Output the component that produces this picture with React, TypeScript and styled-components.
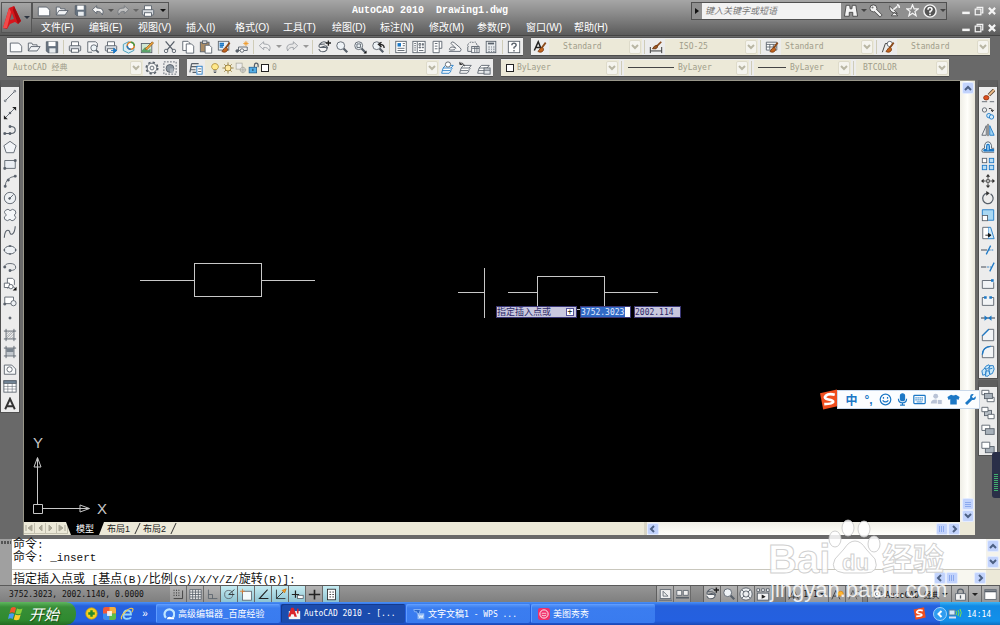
import React from "react";
import styled, { createGlobalStyle, css } from "styled-components";

const MONO = `"DejaVu Sans Mono", "Liberation Mono", "Noto Sans CJK SC", monospace`;
const SANS = `"Liberation Sans", "Noto Sans CJK SC", sans-serif`;
const K = "#58606a";
const B = "#1c78c6";

const GlobalStyle = createGlobalStyle`
  * { box-sizing: border-box; }
  body { margin: 0; background: #696969; font: 10px ${SANS}; }
  button, input, select { font: inherit; color: inherit; margin: 0; padding: 0; border: 0; background: none; border-radius: 0; }
  svg { display: block; flex: none; }
`;

/* ---------- icon drawings, all on a 16 x 16 grid ---------- */

const glass = (
  <>
    <path d="M9.500 9.500L14 14" stroke={K} strokeWidth="2.600" />
    <circle cx="6.500" cy="6.500" r="4.500" fill="#eef3f7" />
  </>
);
const printer = (
  <>
    <path d="M4 7V2h8v5" fill="#fff" />
    <rect x="1.500" y="6.500" width="13" height="6" rx="1" fill="#d5d9de" />
    <rect x="4" y="10" width="8" height="4" fill="#fff" />
  </>
);
const brush = (
  <>
    <path d="M14.500 3L10 9" stroke="#8a4a1c" strokeWidth="2" />
    <path d="M10.500 8.500c-3 0-2.500 3-5 4.500 3 2 7 .5 6.500-3z" fill="#c4641e" stroke="#7a3c12" />
  </>
);
const layers = <path d="M5 5h9l-2.500 3H2.500zM2.500 8L1.500 11h9l2.500-3M1.500 11L.8 14h8.500l2.500-3" fill="#fff" />;
const pageShape = <path d="M1.500 13.500v-10h9q3 1 4 4v6z" fill="#fbfcfd" />;
const hatchFrame = <path d="M3.500 1v14M12.500 1v14M1 3.500h14M1 12.500h14" />;

const ICONS: Record<string, React.ReactNode> = {
  new: pageShape,
  open: <path d="M1.500 12.500v-9h4l1 2h5v2M1.500 12.500l3-5h10.500l-3.500 5z" fill="#f1f3f5" />,
  save: (
    <>
      <path d="M1.500 2h13v12.500h-11l-2-2z" fill="#66727f" />
      <rect x="4" y="2" width="8" height="5" fill="#fff" stroke="none" />
      <rect x="5" y="9.500" width="7" height="5" fill="#e8ecef" stroke="none" />
    </>
  ),
  undo: <path d="M6.500 2L1.500 6.500l5 4.500V8.500q5-.5 6.500 4 3.500-8-6.500-8z" fill="#f4f4f4" />,
  redo: <path d="M9.500 2l5 4.500-5 4.500V8.500q-5-.5-6.500 4-3.500-8 6.500-8z" fill="#e4e4e4" />,
  print: printer,
  preview: (
    <>
      <path d="M2 14V2h9l2 2v4M2 14h5" fill="#f7f8f9" />
      <circle cx="9" cy="9" r="3.500" fill="#eef5f8" />
      <path d="M11.500 11.500l3 3" strokeWidth="2" />
    </>
  ),
  publish: (
    <>
      {printer}
      <path d="M8 12h6M11 9.500l3.500 2.500-3.500 3z" stroke={B} fill={B} />
    </>
  ),
  dwf: (
    <>
      <path d="M1.500 5l6-3 6 3v7l-6 3-6-3z" fill="#d8ecf4" stroke="#3a97b5" />
      <circle cx="10" cy="6.500" r="4" fill="#fff" stroke="#d97a23" strokeWidth="1.800" />
      <path d="M10 2.500a4 4 0 0 1 4 4" stroke="#3a9b4a" strokeWidth="1.800" />
      <path d="M6 6.500a4 4 0 0 0 4 4" stroke={B} strokeWidth="1.800" />
    </>
  ),
  markup: (
    <>
      <rect x="1.500" y="4" width="12" height="10.500" fill="#cfe6d2" />
      <path d="M2 12l4-4 3 4 3-2v4H2z" fill="#5aa36a" stroke="none" />
      <path d="M6 10l8-8 1.500 1.500-8 8z" fill="#f1a33a" stroke="#8a5a1a" strokeWidth=".8" />
    </>
  ),
  cut: (
    <>
      <path d="M3 1.500l8.500 10M13 1.500L4.500 11.500" strokeWidth="1.500" />
      <circle cx="3.500" cy="12.500" r="2" />
      <circle cx="12.500" cy="12.500" r="2" />
    </>
  ),
  copy: (
    <>
      <path d="M2 12V1.500h6l2 2V12z" fill="#fff" />
      <path d="M6 15V4.500h6l2.500 2.500v8z" fill="#fff" />
    </>
  ),
  paste: (
    <>
      <rect x="1.500" y="2.500" width="10" height="11" fill="#a98c66" />
      <rect x="4" y="1" width="5" height="3" fill="#ddd" />
      <path d="M7 15V6h5l2.500 2.500V15z" fill="#fff" />
    </>
  ),
  match: (
    <>
      <rect x="1.500" y="1.500" width="12" height="10" fill="#e9eff5" />
      <path d="M3 4h5M3 6h5M3 8h4" stroke={B} strokeWidth="1.500" />
      {brush}
    </>
  ),
  blockEdit: (
    <>
      <path d="M2 12h4M10 12h4V8H4v4" />
      <circle cx="2.500" cy="12.500" r="1.500" fill={K} />
      <circle cx="8" cy="12" r="2" fill="#fff" />
      <path d="M12.500 1v6M9.500 4h6M10.500 2l4 4M14.500 2l-4 4" stroke="#ee9a2b" />
    </>
  ),
  pan: (
    <>
      <path d="M3 5q3-4 7-2.500l1 1.500M3 5Q1 8 4 8.500h6q2 1 1 3-3 3-7 1.500L2 10.500M3 5l6-.5M4 8.500L10 6.500M10 6.500L12 8.500 11 11.500" fill="#f5f5f5" strokeWidth="1.200" />
      <path d="M13 .5v6M10 3.500h6" stroke="#222" strokeWidth="1.600" />
    </>
  ),
  zoom: glass,
  zoomWindow: (
    <>
      {glass}
      <path d="M4.500 4.500h4v4h-4z" />
      <path d="M15.500 12v3.500H12z" fill="#111" stroke="none" />
    </>
  ),
  zoomPrev: (
    <>
      {glass}
      <path d="M15 9q0-4-5-4M12 2.500L8.500 5l3.500 3" stroke="#222" strokeWidth="1.500" />
    </>
  ),
  props: (
    <>
      <rect x="2" y="1.500" width="12" height="13" fill="#fff" />
      <rect x="4" y="3.500" width="4" height="4" fill={B} stroke="none" />
      <path d="M10 4h2.500M10 6.500h2.500M4 9.500h8M4 12h8" />
    </>
  ),
  design: (
    <>
      <rect x="1" y="1.500" width="14" height="13" fill="#fff" />
      <path d="M6 2v12M8 4h2v2H8zM12 4h1v2h-1zM8 8h2v1H8zM12 8h1v1h-1zM8 12h5M2.500 4h2M2.500 6.500h2M2.500 9h2M2.500 11.500h2" />
    </>
  ),
  palettes: (
    <>
      <path d="M3.500 1.500h10v8h-3v5h-7z" fill="#fff" />
      <path d="M10.500 2v8M5.500 4h3M5.500 7h3M5.500 10h3" />
    </>
  ),
  sheets: <path d="M1 13h13q2-2 0-4L7 3Q4 1 3.500 4L9 9.500q-5-3-7 0T8 11" fill="#f6f6f6" />,
  markups: (
    <>
      <path d="M3 8q-3-3 1-4 1-3 4-1 4-2 4 2 3 1 1 3" strokeDasharray="2 1" />
      <rect x="6.500" y="7.500" width="8.500" height="7" fill="#fff" />
      <path d="M7 9.500h8M10 8v6M12.500 8v6" />
      <path d="M2 8v5h4" />
    </>
  ),
  calc: (
    <>
      <rect x="2.500" y="1.500" width="11" height="13" fill="#e8ebee" />
      <path d="M4.500 4h7" strokeWidth="2" />
      <path d="M5 8h1.500M8 8h1M10.500 8H12M5 10.500h1.500M8 10.500h1M10.500 10.500H12M5 13h1.500M8 13h1M10.500 13H12" />
    </>
  ),
  help: (
    <>
      <rect x="1.500" y="1.500" width="13" height="13" fill="#fff" />
      <path d="M5.500 6q0-2.500 2.500-2.500T10.500 6Q10 7.500 8 8.500V10M8 11.500V13" strokeWidth="1.500" />
    </>
  ),
  textStyle: (
    <>
      <path d="M1.500 12L6 2l4 10M3.500 8.500H9" stroke="#222" strokeWidth="1.700" />
      {brush}
    </>
  ),
  dimStyle: (
    <>
      <path d="M1.500 8v7M14.500 8v7M2 12.500h12" stroke="#222" />
      <path d="M14 2L9 7" stroke="#8a4a1c" strokeWidth="2" />
      <path d="M4 10q2-4 5-4 2 2-1 4z" fill="#a05a24" stroke="#6b3510" />
    </>
  ),
  tableStyle: (
    <>
      <path d="M1.500 2.500h12v9h-12zM1.500 5h12M1.500 8h12M5.500 5v6M9.500 5v6" fill="#fff" />
      {brush}
    </>
  ),
  leaderStyle: (
    <>
      <path d="M1.500 14L5 4h4" stroke="#333" />
      <circle cx="10" cy="4.500" r="3" fill="#fff" />
      {brush}
    </>
  ),
  gear: (
    <>
      <circle cx="8" cy="8" r="6.500" strokeDasharray="2.600 2.500" strokeWidth="2" />
      <circle cx="8" cy="8" r="5.500" fill="#f4f4f4" />
      <circle cx="8" cy="8" r="2.200" />
    </>
  ),
  gearBox: (
    <>
      <rect x="1" y="1" width="14" height="14" strokeDasharray="2 1.500" />
      <circle cx="8" cy="8.500" r="4.500" fill="#8b959f" />
      <path d="M8 8.500h4v5H8z" fill="#aab2ba" stroke="none" />
    </>
  ),
  layerProps: (
    <>
      <path d="M3 3h8M2 6.500h8M1.500 10h6M4 13h4M3 3L1 13" strokeWidth="1.400" />
      <rect x="9" y="6" width="6" height="9" fill="#fff" stroke={B} />
      <path d="M10.500 9H14M10.500 12H14" />
    </>
  ),
  bulb: (
    <>
      <path d="M5.500 10Q3 7.500 3.500 5.500 4.500 2 8 2t4.500 3.500Q13 7.500 10.500 10z" fill="#ffe98a" stroke="#a8842a" />
      <path d="M6 12h4M6.500 14h3" strokeWidth="1.600" />
    </>
  ),
  sun: (
    <>
      <path d="M8 .5v15M.5 8h15M3 3l10 10M13 3L3 13" stroke="#8a6f2a" />
      <circle cx="8" cy="8" r="4" fill="#ffe9a0" stroke="#8a6f2a" />
    </>
  ),
  freeze: (
    <g stroke="#a9a99c">
      <rect x="1.500" y="1.500" width="8" height="8" fill="#eee" />
      <circle cx="10.500" cy="10.500" r="3.500" fill="#ddd" />
      <path d="M10.500 6v9M6 10.500h9" />
    </g>
  ),
  unlock: (
    <>
      <path d="M8.500 7V4.500q0-3 2.500-3t2.500 3V7" strokeWidth="1.600" />
      <rect x="1.500" y="7" width="10" height="7.500" fill="#54aee6" stroke="#1d5c8f" />
      <path d="M6.500 9v3" stroke="#123" />
    </>
  ),
  layerCurrent: (
    <>
      <g stroke={B}>{layers}</g>
      <circle cx="8" cy="4" r="3" fill="#fff" />
    </>
  ),
  layerPrev: (
    <>
      {layers}
      <path d="M1 3q4-2 5 3M1 1v3h3" stroke="#222" />
    </>
  ),
  layerState: (
    <>
      {layers}
      <rect x="8" y="8" width="7" height="7" fill="#dfe3e7" />
      <path d="M8 10.500h7" />
    </>
  ),
  line: (
    <>
      <path d="M2.500 13.500l11-11" />
      <circle cx="2.500" cy="13.500" r="1" fill="#fff" />
      <circle cx="13.500" cy="2.500" r="1" fill="#fff" />
    </>
  ),
  xline: (
    <>
      <path d="M2 14L14 2" />
      <path d="M1 10.500V15h4.500zM15 5.500V1h-4.500z" fill="#222" stroke="none" />
      <circle cx="8" cy="8" r="1" fill="#222" />
    </>
  ),
  pline: (
    <>
      <path d="M2 12h7q5 0 5-4t-5-4H8" strokeWidth="1.300" />
      <path d="M1 11h2v2H1zM7 11h2v2H7zM7 3h2v2H7z" fill={K} />
    </>
  ),
  polygon: <path d="M8 1.500l7 5-2.700 8H3.700L1 6.500z" fill="#f3f5f8" />,
  rect: (
    <>
      <path d="M2 4h12v9H2z" fill="#e9edf2" />
      <path d="M1 12h2v2H1zM13 3h2v2h-2z" fill={K} />
    </>
  ),
  arc: (
    <>
      <path d="M2.500 14Q3 4 14 2.500" />
      <path d="M1.500 13h2v2h-2zM5 6h2v2H5zM13 1.500h2v2h-2z" fill={K} />
    </>
  ),
  circle: (
    <>
      <circle cx="8" cy="8" r="6.500" fill="#eef1f4" />
      <path d="M8 8l4-4" />
      <circle cx="7.500" cy="8.500" r="1" fill={K} />
    </>
  ),
  cloud: <path d="M4 8Q0 5 3 2.500T8 3q3-3 6 0 2 3-1 5 3 3 0 5.500T8 13q-3 3-6 0-2-3 2-5z" fill="#f5f7f9" />,
  spline: <path d="M1.500 14.500Q2 6 5.500 6q2 0 2.500 3 .5 2 2.500 1.500Q13.500 9 14 1.500" strokeWidth="1.300" />,
  ellipse: (
    <>
      <ellipse cx="8" cy="8" rx="6.500" ry="4.500" fill="#eef1f4" />
      <path d="M7 3h2v1H7zM1 7.500h1v1H1zM14 7.500h1v1h-1zM7.500 12h1v1h-1z" />
    </>
  ),
  ellipseArc: (
    <>
      <path d="M2 8q0-4 6-4t6.500 4-6.500 4" />
      <path d="M1 7h2v2H1zM7 11h2v2H7z" fill={K} />
    </>
  ),
  insert: (
    <>
      <path d="M5 7V1.500h6l2 2V9" fill="#fff" />
      <path d="M1.500 7h6v5h-6zM5 13l5-3 4 3" fill="#fff" />
      <circle cx="9" cy="11" r="2.500" fill="#fff" />
      <path d="M15.500 11v4.500H11z" fill="#111" stroke="none" />
    </>
  ),
  makeBlock: (
    <>
      <path d="M2 11V3.500h10V11z" fill="#fff" />
      <circle cx="12" cy="10.500" r="3" fill="#eef1f4" />
      <path d="M1 10.500h2v2H1z" fill={K} />
    </>
  ),
  point: <circle cx="8" cy="8" r="1.200" fill={K} />,
  hatch: (
    <>
      <path d="M4 7l3-3M4 10l6-6M4 12l8-8M7 12l5-5M10 12l2-2" strokeWidth=".5" />
      {hatchFrame}
    </>
  ),
  gradient: (
    <>
      <rect x="4" y="4" width="8" height="4" fill="#7b858f" stroke="none" />
      <rect x="4" y="8" width="8" height="4" fill="#c3c9cf" stroke="none" />
      {hatchFrame}
    </>
  ),
  region: (
    <>
      <path d="M1.500 14V3.500H10L14.500 8v6z" fill="#f7f9fa" />
      <circle cx="7.500" cy="8.500" r="3" fill="#fff" />
    </>
  ),
  table: (
    <>
      <rect x="1" y="2" width="14" height="13" fill="#fff" />
      <rect x="1" y="2" width="14" height="3" fill="#73879a" />
      <path d="M1 8.500h14M1 11.500h14M5.500 5v10M10.500 5v10" strokeWidth=".6" />
    </>
  ),
  mtext: <path d="M2.500 14L8 2l5.500 12M4.500 10.500h7" stroke="#333" strokeWidth="2.200" />,
  erase: (
    <>
      <path d="M15 1L9 7" stroke="#5b4636" strokeWidth="4" />
      <path d="M15 1L9 7" stroke="#f2c08a" strokeWidth="2" />
      <ellipse cx="6" cy="10" rx="3" ry="2.500" fill="#e0501c" stroke="#8f2f0c" />
      <path d="M1 14.500h6M10 14.500h5" />
    </>
  ),
  copyObj: (
    <>
      <circle cx="4" cy="4.500" r="2.500" />
      <path d="M9 3q4-1 4 3M11.500 4.500L13 6.500l1.500-2" stroke="#222" />
      <circle cx="9" cy="11" r="2.500" stroke={B} fill="#d3ebfa" />
      <circle cx="12" cy="12.500" r="2.500" stroke={B} fill="#d3ebfa" />
    </>
  ),
  mirror: (
    <>
      <path d="M6 3v11H1z" fill="#eee" />
      <path d="M10 3v11h5z" fill="#9fd3f2" stroke={B} />
      <path d="M8 1v14" stroke="#222" />
    </>
  ),
  offset: (
    <>
      <path d="M15 9.500h-3V6q-1-4-4-4T4 6v3.500q-3 0-3 2.500t2 2h12" fill="#e2f2fc" />
      <path d="M15 12.500H4q-1.500-1 0-1.500h2.500V7q0-2 1.500-2t1.500 2v4H15" stroke={B} strokeWidth="1.500" fill="#b9def5" />
    </>
  ),
  array: (
    <>
      <rect x="1.500" y="1.500" width="5" height="5" fill="#fff" />
      <g fill="#b9def5" stroke={B}>
        <rect x="9.500" y="1.500" width="5" height="5" />
        <rect x="1.500" y="9.500" width="5" height="5" />
        <rect x="9.500" y="9.500" width="5" height="5" />
      </g>
    </>
  ),
  move: (
    <>
      <path d="M8 1.500v4M8 10.500v4M1.500 8h4M10.500 8h4M6.500 6.500h3v3h-3z" stroke="#333" />
      <path d="M8 0l2.500 3h-5zM8 16l2.500-3h-5zM0 8l3-2.500v5zM16 8l-3-2.500v5z" fill="#333" stroke="none" />
    </>
  ),
  rotate: (
    <>
      <path d="M7 2.500a6 6 0 1 0 4 .8" strokeWidth="1.400" />
      <path d="M6 0l4 2.500L6 5.500z" fill="#333" stroke="none" />
    </>
  ),
  scale: (
    <>
      <path d="M1.500 8V2h13v12H8" fill="#a9d8f3" stroke={B} />
      <rect x="1.500" y="8.500" width="6" height="6" fill="#fff" />
    </>
  ),
  stretch: (
    <>
      <path d="M8 1.500h3l4 13H8z" fill="#cde8f8" stroke={B} />
      <path d="M8 1.500H2v13h6" fill="#fff" />
      <path d="M5 10.500h5M8.500 8.500l3 2-3 2z" stroke="#111" fill="#111" />
    </>
  ),
  trim: (
    <>
      <path d="M0 8h7" strokeWidth="1.300" />
      <path d="M9 8h6" strokeDasharray="2 1" stroke={B} />
      <path d="M6 13l5-10" stroke={B} strokeWidth="1.500" />
    </>
  ),
  extend: (
    <>
      <path d="M0 8h6" strokeWidth="1.300" />
      <path d="M7 8h5" strokeDasharray="2 1" stroke={B} />
      <path d="M10 13l5-10" stroke={B} strokeWidth="1.500" />
    </>
  ),
  breakPt: (
    <>
      <path d="M13 4H1.500v9h13V6" fill="#f2f4f6" />
      <path d="M11.500 2.500h3v3h-3z" fill={B} stroke="none" />
    </>
  ),
  breakObj: (
    <>
      <path d="M4 4H1.500v9h13V4H12" fill="#f2f4f6" />
      <path d="M3.500 2.500h3v3h-3zM9.500 2.500h3v3h-3z" fill={B} stroke="none" />
    </>
  ),
  join: (
    <>
      <path d="M0 8h16" strokeWidth="1.400" />
      <path d="M4 5l4 3-4 3zM12 5L8 8l4 3z" fill={B} stroke="none" />
    </>
  ),
  chamfer: (
    <>
      <path d="M1.500 14.500v-6l7-7h6v13z" fill="#f2f4f6" />
      <path d="M1.500 9l7.500-7.500" stroke={B} strokeWidth="1.500" />
    </>
  ),
  fillet: (
    <>
      <path d="M1.500 14.500V11Q2 2 11 1.500h3.500v13z" fill="#f2f4f6" />
      <path d="M1.500 11Q2 2 11 1.500" stroke={B} strokeWidth="1.500" />
    </>
  ),
  explode: (
    <g stroke={B} fill="#c9e7f8">
      <path d="M1 9l3-3 2 2-1 5-3 1zM4 6q1-3 5-4l1 2-3 3zM10 3h4l1 4-2 5-3 1-1-6z" />
      <path d="M6 9h3l1 4-2 2H5zM9 7l4-1" />
    </g>
  ),
  orderFront: (
    <>
      <path d="M1 1.500h8v5H1zM7 9.500h8v5H7z" fill="#fff" />
      <rect x="4" y="5" width="9" height="6" fill="#a8b1ba" />
    </>
  ),
  orderBack: (
    <>
      <rect x="4" y="5" width="8" height="6" fill="#b9c0c7" />
      <path d="M1 1.500h7v5H1zM8 9.500h7v5H8z" fill="#fff" />
    </>
  ),
  orderAbove: (
    <>
      <path d="M1 2.500h9v6H1z" fill="#fff" />
      <rect x="5" y="6.500" width="10" height="6.500" fill="#a8b1ba" />
    </>
  ),
  orderUnder: (
    <>
      <rect x="5" y="7.500" width="10" height="7" fill="#a8b1ba" />
      <path d="M1 2.500h9v7H1z" fill="#fff" />
    </>
  ),
  snap: (
    <>
      <path d="M2 3h1M5 3h1M8 3h1M2 6h1M5 6h1M8 6h1M2 9h1M5 9h1M8 9h1" strokeWidth="1.500" stroke="#333" />
      <path d="M2 13h11V3" stroke="#333" />
    </>
  ),
  grid: <path d="M1 2h14v12H1zM1 5h14M1 8h14M1 11h14M4.500 2v12M8 2v12M11.500 2v12" fill="#eee" />,
  ortho: <path d="M3 2v11h11M3 8h5v5" />,
  polar: (
    <>
      <circle cx="7" cy="8" r="5" />
      <path d="M7 8l7-6M7 8h7" stroke="#222" />
    </>
  ),
  osnap: (
    <>
      <rect x="3" y="4" width="11" height="11" fill="#f4fbfc" />
      <path d="M3 1v6M0 4h6" stroke="#e07b2a" />
    </>
  ),
  otrack: <path d="M13 2L3 13h11" stroke="#222" strokeWidth="1.300" />,
  ducs: (
    <>
      <path d="M3 2v11h11M3 13L12 4" stroke="#222" />
      <path d="M10 3l5-2-2 5z" fill="#f0a030" stroke="#c97512" />
    </>
  ),
  dyn: (
    <>
      <path d="M1 8h9M5.500 3v9" stroke="#222" strokeWidth="1.500" />
      <rect x="8" y="9" width="7" height="4" fill="#fff" />
    </>
  ),
  lwt: <path d="M1 8h14M8 2v12" stroke="#222" strokeWidth="2" />,
  qp: (
    <>
      <rect x="3" y="1.500" width="10" height="13" fill="#fff" stroke="#222" />
      <path d="M5.500 5h2M9 5h2M5.500 8h2M9 8h2M5.500 11h2M9 11h2" stroke="#222" />
    </>
  ),
  model: (
    <>
      <rect x="1.500" y="2" width="13" height="11" fill="#f0f0f0" />
      <path d="M5 4v6h6zM0 15h16" />
    </>
  ),
  layout: (
    <>
      <path d="M1 3h6v6H1zM9 3h6v6H9z" fill="#f0f0f0" />
      <path d="M0 12h16" strokeWidth="2" />
    </>
  ),
  wheel: (
    <>
      <circle cx="8" cy="8" r="7" fill="#eceff1" />
      <circle cx="8" cy="8" r="3.500" />
      <path d="M3 3l3 3M13 3l-3 3M3 13l3-3M13 13l-3-3" />
    </>
  ),
  motion: (
    <>
      <path d="M1 2h3v3H1zM6.500 2h3v3h-3zM12 2h3v3h-3z" fill="#fff" />
      <rect x="1.500" y="7" width="13" height="8" fill="#f4f4f4" />
      <path d="M6.500 8.500v5L11 11z" fill="#222" stroke="none" />
    </>
  ),
  scaleMark: <path d="M1 14L7 2l6 12M7 2v12M0 11h14" stroke="#333" />,
  annoVis: (
    <>
      <path d="M1 14L6 3l5 11M3 10h6" stroke="#333" />
      <circle cx="12" cy="7" r="3" fill="#ffb52e" stroke="#e08a12" />
    </>
  ),
  annoAuto: (
    <>
      <path d="M1 14L6 3l5 11M3 10h6" stroke="#555" />
      <circle cx="12" cy="7" r="3" fill="#ccc" stroke="#666" />
    </>
  ),
  lock: (
    <>
      <path d="M4.500 7V4.500Q4.500 1.500 8 1.500t3.500 3V7" strokeWidth="1.500" />
      <rect x="2" y="7" width="12" height="8" fill="#f4f4f4" />
      <path d="M8 9v4" strokeWidth="1.600" />
    </>
  ),
  clean: (
    <>
      <rect x="1" y="2" width="14" height="12" fill="#fff" />
      <path d="M1 4h14" strokeWidth="2.500" />
    </>
  ),
  binoculars: (
    <path d="M2.500 1.500h4l.5 4h2l.5-4h4L15.500 14H10V9.500H6V14H.5z" fill="#f4f4f4" stroke="#444" />
  ),
  key: (
    <>
      <path d="M6 6l8 8" stroke="#444" strokeWidth="4" />
      <circle cx="5" cy="5" r="4" fill="#f4f4f4" stroke="#444" />
      <path d="M5 5l8.500 8.500" stroke="#f4f4f4" strokeWidth="2.500" />
      <circle cx="4" cy="4" r="1.200" fill="#777" stroke="none" />
    </>
  ),
  dish: (
    <>
      <path d="M2 2.500q-1 9 9.500 9zM4 14.500h8L8 10z" fill="#f4f4f4" stroke="#444" />
      <path d="M6.500 7l5-4M11 1q3 0 3 4" stroke="#f4f4f4" strokeWidth="1.800" />
    </>
  ),
  star: <path d="M8 1l2 5h5l-4 3.300 1.500 5.200L8 11.500l-4.500 3L5 9.300 1 6h5z" fill="#888" stroke="#f4f4f4" strokeWidth="1.500" />,
  helpRound: (
    <>
      <circle cx="8" cy="8" r="7" fill="#555" stroke="#f4f4f4" strokeWidth="1.600" />
      <path d="M5.700 6.500q0-2.500 2.300-2.500t2.300 2.200Q10 8 8 8.500V10M8 11.200v1.600" stroke="#fff" strokeWidth="1.800" />
    </>
  ),
  min: <path d="M2 11h12" stroke="#f4f4f4" strokeWidth="4" />,
  restore: (
    <g stroke="#f4f4f4" strokeWidth="2">
      <path d="M5 4V2h9v9h-2" />
      <rect x="2" y="5" width="9" height="9" />
    </g>
  ),
  close: <path d="M3 3l10 10M13 3L3 13" stroke="#f4f4f4" strokeWidth="3.500" />,
  smile: (
    <g stroke={B} strokeWidth="1.500">
      <circle cx="8" cy="8" r="6.500" />
      <path d="M4.500 9q3.500 4 7 0M5.500 5v2M10.500 5v2" />
    </g>
  ),
  mic: (
    <g stroke={B} strokeWidth="1.500">
      <rect x="5.500" y="1" width="5" height="8.500" rx="2.500" fill={B} />
      <path d="M3 7q0 5 5 5t5-5M8 12v3M5 15h6" />
    </g>
  ),
  keyboard: (
    <g stroke={B}>
      <rect x="1" y="3" width="14" height="10" rx="1" strokeWidth="1.500" />
      <path d="M3 6h10M3 8.500h10" strokeDasharray="1.500 1" strokeWidth="1.500" />
      <path d="M4.500 11h7" />
    </g>
  ),
  person: (
    <g fill="#b9c3d6" stroke="none">
      <circle cx="7" cy="4" r="3" />
      <path d="M1 13q0-5 6-5t6 5z" />
      <rect x="9" y="8" width="6" height="6" stroke="#fff" />
    </g>
  ),
  shirt: <path d="M5 2q3 2 6 0l4.500 3L14 8.500l-2-1V14H4V7.500l-2 1L.5 5z" fill={B} stroke="none" />,
  wrench: (
    <>
      <path d="M2.500 13.500L9 7" stroke={B} strokeWidth="3.500" />
      <path d="M14.500 4l-3 2.500-2-2L12 1.500Q8 .5 7.500 4T10 8.500q5 1 4.500-4.500z" fill={B} stroke="none" />
    </>
  ),
};

function Icon({ name, size = 14, faded }: { name: string; size?: number; faded?: boolean }) {
  return (
    <svg width={size} height={size} viewBox="0 0 16 16" fill="none" stroke={K} opacity={faded ? 0.55 : 1} aria-hidden="true">
      {ICONS[name]}
    </svg>
  );
}

/* ---------- shared parts ---------- */

const Row = styled.div`
  display: flex;
  align-items: center;
`;

const IconButton = styled.button<{ $w?: number }>`
  display: flex;
  flex: none;
  align-items: center;
  justify-content: center;
  width: ${(p) => p.$w ?? 18}px;
  height: 16px;
`;

const Caret = styled.span<{ $color?: string }>`
  flex: none;
  border: 3px solid transparent;
  border-top-color: ${(p) => p.$color ?? "#222"};
  border-bottom-width: 0;
`;

const Latin = styled.span<{ $size: number }>`
  font-size: ${(p) => p.$size}px;
`;

/* CJK runs keep the parent size, the half-width runs between them take `latin`. */
function Mixed({ text, latin }: { text: string; latin: number }) {
  return (
    <>
      {text.split(/([\u4e00-\u9fff]+)/).map((run, i) =>
        i % 2 ? run : run && <Latin key={i} $size={latin}>{run}</Latin>
      )}
    </>
  );
}

/* ---------- title and menu ---------- */

const Header = styled.header`
  display: flex;
  height: 36px;
  padding: 2px 2px 0 1px;
  background: linear-gradient(#a6a6a6, #8a8a8a 40%, #5b5b5b);
  border-bottom: 1px solid #444;
  color: #fff;
`;

const AppButton = styled.button`
  display: flex;
  align-items: center;
  gap: 2px;
  width: 31px;
  height: 31px;
  border: 1px solid #555;
  background: linear-gradient(#a5a5a5, #6d6d6d);
`;

const HeaderBody = styled.div`
  flex: 1;
  min-width: 0;
`;

const TitleRow = styled(Row)`
  height: 17px;
`;

const QuickBar = styled(Row)`
  width: 137px;
  height: 17px;
  padding-left: 2px;
  border: 1px solid #555;
  background: linear-gradient(#a0a0a0, #8a8a8a);
`;

const Title = styled.h1`
  flex: 1;
  margin: 0;
  text-align: center;
  font: bold 10px "Liberation Mono", monospace;
  white-space: pre;
`;

const SearchBar = styled.form`
  display: flex;
  align-items: center;
  width: 256px;
  height: 18px;
  border: 1px solid #505050;
  background: #8f8f8f;
`;

const SearchArrow = styled.span`
  margin: 0 3px;
  border: 3px solid transparent;
  border-left: 4px solid #111;
  border-right: 0;
`;

const SearchInput = styled.input`
  width: 139px;
  height: 16px;
  padding-left: 3px;
  margin-right: 1px;
  background: #f2f2f2;
  font: italic 9px ${SANS};
  &::placeholder { color: #777; }
`;

const WindowButtons = styled(Row)`
  justify-content: flex-end;
  width: 51px;
`;

const MenuRow = styled(Row)`
  height: 17px;
  padding-left: 1px;
`;

const Menu = styled.nav`
  display: flex;
  flex: 1;
`;

const MenuItem = styled.button`
  flex: none;
  width: 49px;
  margin-right: -1px;
  padding-left: 8px;
  text-align: left;
  line-height: 15px;
  white-space: nowrap;
  &:nth-child(even) { width: 50px; }
`;

const MENUS = ["文件(F)", "编辑(E)", "视图(V)", "插入(I)", "格式(O)", "工具(T)", "绘图(D)", "标注(N)", "修改(M)", "参数(P)", "窗口(W)", "帮助(H)"];

function WinControls() {
  return (
    <WindowButtons>
      <IconButton $w={13} aria-label="最小化"><Icon name="min" size={10} /></IconButton>
      <IconButton $w={13} aria-label="还原"><Icon name="restore" size={10} /></IconButton>
      <IconButton $w={13} aria-label="关闭"><Icon name="close" size={10} /></IconButton>
    </WindowButtons>
  );
}

function TitleArea() {
  return (
    <Header>
      <AppButton aria-label="应用程序菜单">
        <svg width="20" height="27" viewBox="0 0 20 27">
          <path d="M1 24L7 4l5-2 7 15-3 3-3-2-5 2-3 5z" fill="#d8151c" />
          <path d="M1 24L7 4l2 4-4 16z" fill="#f04a4a" />
          <path d="M10 9l2 6-4 1z" fill="#6d6d6d" />
          <path d="M12 2l7 15-3 3-5-14z" fill="#a30c12" />
        </svg>
        <Caret $color="#2c3440" />
      </AppButton>
      <HeaderBody>
        <TitleRow>
          <QuickBar>
            <IconButton aria-label="新建"><Icon name="new" /></IconButton>
            <IconButton aria-label="打开"><Icon name="open" /></IconButton>
            <IconButton aria-label="保存"><Icon name="save" size={13} /></IconButton>
            <IconButton aria-label="放弃"><Icon name="undo" /></IconButton>
            <IconButton $w={7} aria-label="放弃列表"><Caret $color="#555" /></IconButton>
            <IconButton aria-label="重做"><Icon name="redo" faded /></IconButton>
            <IconButton $w={7} aria-label="重做列表"><Caret $color="#666" /></IconButton>
            <IconButton aria-label="打印"><Icon name="print" /></IconButton>
            <IconButton $w={12} aria-label="自定义"><Caret $color="#111" /></IconButton>
          </QuickBar>
          <Title>AutoCAD 2010  Drawing1.dwg</Title>
          <SearchBar>
            <SearchArrow />
            <SearchInput aria-label="搜索" placeholder="键入关键字或短语" />
            <IconButton type="button" aria-label="搜索"><Icon name="binoculars" /></IconButton>
            <IconButton type="button" $w={7} aria-label="搜索选项"><Caret $color="#444" /></IconButton>
            <IconButton type="button" aria-label="速博应用中心"><Icon name="key" /></IconButton>
            <IconButton type="button" aria-label="通讯中心"><Icon name="dish" size={13} /></IconButton>
            <IconButton type="button" aria-label="收藏夹"><Icon name="star" size={13} /></IconButton>
            <IconButton type="button" aria-label="帮助"><Icon name="helpRound" /></IconButton>
            <IconButton type="button" $w={7} aria-label="帮助选项"><Caret $color="#444" /></IconButton>
          </SearchBar>
          <WinControls />
        </TitleRow>
        <MenuRow>
          <Menu>{MENUS.map((m) => <MenuItem key={m}>{m}</MenuItem>)}</Menu>
          <WinControls />
        </MenuRow>
      </HeaderBody>
    </Header>
  );
}

/* ---------- toolbars ---------- */

const ToolbarRow = styled.div`
  display: flex;
  gap: 8px;
  height: 21px;
  padding: 1px 0 0 7px;
  background: #696969;
`;

const ToolGroup = styled(Row)`
  flex: none;
  height: 19px;
  border-top: 1px solid #555;
  border-bottom: 1px solid #4c4c4c;
  background: #ececec;
`;

const Divider = styled.span`
  flex: none;
  width: 1px;
  height: 14px;
  margin: 0 2px;
  background: #cfccb8;
`;

const Field = styled.label<{ $w: number; $indent: number }>`
  display: flex;
  flex: none;
  align-items: center;
  gap: 1px;
  width: ${(p) => p.$w}px;
  height: 16px;
  padding: 0 1px 0 ${(p) => p.$indent}px;
  background: #ece9d8;
  color: #a09d8a;
  font: 8px ${MONO};
`;

const FieldSelect = styled.select<{ $gap?: number }>`
  flex: 1;
  min-width: 0;
  margin-left: ${(p) => p.$gap ?? 0}px;
  appearance: none;
`;

const FieldArrow = styled.span`
  display: flex;
  align-items: center;
  justify-content: center;
  width: 12px;
  height: 14px;
  border: 1px solid #dedbca;
  border-radius: 2px;
  background: #f5f4ee;
`;

const Chevron = ({ dir = "down", color = "#4d6185" }: { dir?: string; color?: string }) => {
  const paths: Record<string, string> = { down: "M1 2l3 3 3-3", up: "M1 6l3-3 3 3", left: "M5 1L2 4l3 3", right: "M3 1l3 3-3 3" };
  return (
    <svg width="8" height="8" viewBox="0 0 8 8" fill="none" stroke={color} strokeWidth="2">
      <path d={paths[dir]} />
    </svg>
  );
};

const Swatch = styled.span`
  flex: none;
  width: 8px;
  height: 8px;
  border: 1px solid #222;
  background: #fff;
`;

const LineSample = styled.span<{ $w: number }>`
  flex: none;
  width: ${(p) => p.$w}px;
  height: 1px;
  background: #444;
`;

function Combo(p: { label: string; value: string; w: number; indent: number; gap?: number; children?: React.ReactNode }) {
  return (
    <Field $w={p.w} $indent={p.indent}>
      {p.children}
      <FieldSelect $gap={p.gap} aria-label={p.label}><option>{p.value}</option></FieldSelect>
      <FieldArrow><Chevron color="#b9b6a4" /></FieldArrow>
    </Field>
  );
}

const STANDARD = ["new", "open", "save", "|", "print", "preview", "publish", "dwf", "markup", "|", "cut", "copy", "paste", "match", "blockEdit", "|", "undo", "v", "redo", "v", "|", "pan", "zoom", "zoomWindow", "zoomPrev", "|", "props", "design", "palettes", "sheets", "markups", "calc", "|", "help"];

const STYLES = [
  { icon: "textStyle", label: "文字样式", value: "Standard", indent: 14 },
  { icon: "dimStyle", label: "标注样式", value: "ISO-25", indent: 14 },
  { icon: "tableStyle", label: "表格样式", value: "Standard", indent: 4 },
  { icon: "leaderStyle", label: "多重引线样式", value: "Standard", indent: 14 },
];

function Toolbars() {
  return (
    <>
      <ToolbarRow>
        <ToolGroup>
          {STANDARD.map((n, i) =>
            n === "|" ? <Divider key={i} /> : n === "v" ? (
              <IconButton key={i} $w={9} aria-label="列表"><Caret $color="#999" /></IconButton>
            ) : (
              <IconButton key={i} aria-label={n}><Icon name={n} faded={n === "undo" || n === "redo"} /></IconButton>
            )
          )}
        </ToolGroup>
        <ToolGroup>
          {STYLES.map((s, i) => (
            <React.Fragment key={s.icon}>
              {i > 0 && <Divider />}
              <IconButton aria-label={s.label}><Icon name={s.icon} /></IconButton>
              <Combo label={s.label} value={s.value} w={93} indent={s.indent} />
            </React.Fragment>
          ))}
        </ToolGroup>
      </ToolbarRow>
      <ToolbarRow>
        <ToolGroup>
          <Combo label="工作空间" value="AutoCAD 经典" w={136} indent={6} />
          <IconButton aria-label="工作空间设置"><Icon name="gear" /></IconButton>
          <IconButton aria-label="我的工作空间"><Icon name="gearBox" /></IconButton>
        </ToolGroup>
        <ToolGroup>
          <IconButton aria-label="图层特性"><Icon name="layerProps" /></IconButton>
          <Combo label="图层" value="0" w={234} indent={4} gap={2}>
            <Icon name="bulb" size={12} />
            <Icon name="sun" size={12} />
            <Icon name="freeze" size={12} />
            <Icon name="unlock" size={12} />
            <Swatch />
          </Combo>
          <IconButton aria-label="置为当前"><Icon name="layerCurrent" /></IconButton>
          <IconButton aria-label="上一个图层"><Icon name="layerPrev" /></IconButton>
          <IconButton aria-label="图层状态"><Icon name="layerState" /></IconButton>
        </ToolGroup>
        <ToolGroup>
          <Combo label="颜色" value="ByLayer" w={118} indent={5} gap={2}><Swatch /></Combo>
          <Divider />
          <Combo label="线型" value="ByLayer" w={125} indent={4} gap={3}><LineSample $w={46} /></Combo>
          <Divider />
          <Combo label="线宽" value="ByLayer" w={97} indent={4} gap={3}><LineSample $w={28} /></Combo>
          <Divider />
          <Combo label="打印样式" value="BTCOLOR" w={93} indent={7} />
        </ToolGroup>
      </ToolbarRow>
    </>
  );
}

/* ---------- workspace ---------- */

const Workspace = styled.main`
  position: relative;
  display: flex;
  flex: 1;
  min-height: 456px;
  padding-top: 2px;
  background: #696969;
`;

const SideColumn = styled.aside<{ $w: number; $pad: number }>`
  display: flex;
  flex-direction: column;
  gap: 1px;
  width: ${(p) => p.$w}px;
  padding-left: ${(p) => p.$pad}px;
`;

const Palette = styled.div<{ $h: number }>`
  display: flex;
  flex-direction: column;
  flex: none;
  width: 20px;
  height: ${(p) => p.$h}px;
  border: 1px solid #505050;
  border-top: 7px solid #5e5e5e;
  background: #ececec;
`;

const PaletteButton = styled.button`
  display: flex;
  flex: 1;
  align-items: center;
  justify-content: center;
`;

const Sheet = styled.div`
  display: flex;
  flex: 1;
  flex-direction: column;
  min-width: 0;
  border: solid #99978a;
  border-width: 1px 0 0 1px;
`;

const CanvasRow = styled.div`
  display: flex;
  flex: 1;
`;

const Canvas = styled.section`
  position: relative;
  flex: 1;
  overflow: hidden;
  background: #000;
`;

const Drawing = styled.svg`
  position: absolute;
  inset: 0;
  width: 100%;
  height: 100%;
`;

const UcsIcon = styled.svg`
  position: absolute;
  left: 6px;
  bottom: 6px;
`;

const DynamicInput = styled.div`
  position: absolute;
  left: 472px;
  top: 225px;
  display: flex;
  gap: 3px;
  color: #2b2766;
  font: 9px ${MONO};
`;

const dynBox = css`
  height: 12px;
  border: 1px solid #3a3675;
  background: #c9c8de;
`;

const DynPrompt = styled.div`
  ${dynBox}
  display: flex;
  align-items: center;
  justify-content: space-between;
  width: 81px;
  padding-right: 2px;
  line-height: 10px;
`;

const DynKey = styled.span`
  display: flex;
  align-items: center;
  justify-content: center;
  width: 8px;
  height: 8px;
  border: 1px solid #55539a;
  background: #fff;
  color: #111;
  font-size: 8px;
  line-height: 6px;
`;

const DynField = styled.label<{ $w: number; $active?: boolean }>`
  ${dynBox}
  display: flex;
  width: ${(p) => p.$w}px;
  ${(p) => p.$active && "background: #fff; color: #e4ecff;"}
`;

const DynValue = styled.input<{ $active?: boolean }>`
  width: 44px;
  height: 10px;
  font: 8px ${MONO};
  ${(p) => p.$active && "background: #316ac5;"}
`;

const ScrollV = styled.div`
  display: flex;
  flex-direction: column;
  justify-content: space-between;
  align-items: center;
  width: 15px;
  padding: 1px 0 0;
  background: linear-gradient(90deg, #efeee6, #fffffb 50%, #e8e6da);
`;

const ScrollButton = styled.button<{ $w?: number }>`
  display: flex;
  flex: none;
  align-items: center;
  justify-content: center;
  width: ${(p) => p.$w ?? 12}px;
  height: 12px;
  border: 1px solid #e4ecff;
  border-radius: 2px;
  background: #c2d3fc;
`;

const Thumb = styled(ScrollButton)<{ $upright?: boolean }>`
  &::after {
    content: "";
    width: 6px;
    height: 6px;
    background: repeating-linear-gradient(${(p) => (p.$upright ? "0deg" : "90deg")}, #8ba9ee 0 1px, transparent 1px 2px);
  }
`;

const TabRow = styled(Row)`
  height: 13px;
  background: #ece9d8;
`;

const TabNav = styled.button`
  display: flex;
  align-items: center;
  justify-content: center;
  width: 11px;
  height: 11px;
  border: solid #c4c1b0;
  border-width: 0 1px 1px 0;
`;

const Tab = styled.button<{ $active?: boolean }>`
  position: relative;
  width: 36px;
  height: 13px;
  padding-left: 3px;
  text-align: left;
  color: #222;
  font: 9px ${SANS};
  line-height: 12px;
  ${(p) => p.$active
    ? "width: 38px; margin-left: -2px; padding-left: 10px; background: #000; color: #fff; clip-path: polygon(0 0, 100% 0, 33px 100%, 5px 100%);"
    : "&::after { content: ''; position: absolute; right: 2px; top: 1px; width: 1px; height: 11px; background: #333; transform: skewX(-25deg); }"}
`;

const ScrollH = styled(Row)`
  width: 316px;
  height: 13px;
  margin-left: auto;
  border-left: 3px solid #d8d5c4;
  background: linear-gradient(#efeee6, #fffffb);
`;

const Track = styled.span`
  flex: 1;
`;

const Corner = styled.span`
  width: 15px;
  height: 13px;
  background: #ece9d8;
`;

const ImeBar = styled.div`
  position: absolute;
  right: 20px;
  top: 311px;
  display: flex;
  align-items: center;
  height: 21px;
`;

const ImeKeys = styled(Row)`
  height: 19px;
  margin-left: -3px;
  padding-left: 5px;
  border: 1px solid #c9d8ea;
  background: #fbfdff;
  color: ${B};
  font: bold 12px ${SANS};
`;

const ImeButton = styled(IconButton)`
  width: 17px;
`;

const SideWidget = styled.div`
  position: absolute;
  right: 0;
  top: 374px;
  display: flex;
  justify-content: center;
  align-items: center;
  width: 8px;
  height: 46px;
  padding-top: 16px;
  border-radius: 3px 0 0 3px;
  background: #2a2f48;
  &::after {
    content: "";
    width: 4px;
    height: 18px;
    background: repeating-linear-gradient(#3fae6d 0 1px, #2a2f48 1px 2px);
  }
`;

const DRAW = ["line", "xline", "pline", "polygon", "rect", "arc", "circle", "cloud", "spline", "ellipse", "ellipseArc", "insert", "makeBlock", "point", "hatch", "gradient", "region", "table", "mtext"];
const MODIFY = ["erase", "copyObj", "mirror", "offset", "array", "move", "rotate", "scale", "stretch", "trim", "extend", "breakPt", "breakObj", "join", "chamfer", "fillet", "explode"];
const ORDER = ["orderFront", "orderBack", "orderAbove", "orderUnder"];

function ToolPalette({ icons, height }: { icons: string[]; height: number }) {
  return (
    <Palette $h={height}>
      {icons.map((n) => <PaletteButton key={n} aria-label={n}><Icon name={n} /></PaletteButton>)}
    </Palette>
  );
}

function SogouMark({ size }: { size: number }) {
  return (
    <svg width={size} height={size} viewBox="0 0 20 20">
      <path d="M1 4L17 0.500l2.500 15.500L4 19.500z" fill="#f04e1e" />
      <path d="M15 5.500Q9 4 6.500 6.500T9 10t4.500 2.500T5 14.500" fill="none" stroke="#fff" strokeWidth="2.600" />
    </svg>
  );
}

function TabArrow({ d }: { d: string }) {
  return <svg width="8" height="8" viewBox="0 0 8 8" fill="#aaa796" stroke="#aaa796"><path d={d} /></svg>;
}

function DrawingArea() {
  return (
    <Workspace>
      <SideColumn $w={23} $pad={0}><ToolPalette icons={DRAW} height={333} /></SideColumn>
      <Sheet>
        <CanvasRow>
          <Canvas>
            <Drawing fill="none" stroke="#c8c8c8" shapeRendering="crispEdges">
              <path d="M116 199.500H170M238 199.500H291" />
              <path d="M170.500 182.500H237.500V215.500H170.500z" />
              <path d="M434 211.500H460M484 211.500H513M580 211.500H634" />
              <path d="M460.500 187V237" />
              <path d="M513.500 228.500V195.500H580.500V228.500z" />
            </Drawing>
            <UcsIcon width="84" height="82" fill="none" stroke="#c8c8c8">
              <path d="M3.500 70.500h9v9h-9zM7.500 70.500V33M12 74.500H50" />
              <path d="M7.500 23.500L4 33h7zM7.500 24v9M59.500 74.500L50 71v7zM50 74.500h9" />
              <text x="3" y="14" fill="#c8c8c8" stroke="none" fontFamily="Liberation Sans, sans-serif" fontSize="15">Y</text>
              <text x="67" y="80" fill="#c8c8c8" stroke="none" fontFamily="Liberation Sans, sans-serif" fontSize="15">X</text>
            </UcsIcon>
            <DynamicInput>
              <DynPrompt>指定插入点或<DynKey>+</DynKey></DynPrompt>
              <DynField $w={51} $active><DynValue $active aria-label="X" defaultValue="3752.3023" /></DynField>
              <DynField $w={47}><DynValue aria-label="Y" defaultValue="2002.114" /></DynField>
            </DynamicInput>
          </Canvas>
          <ScrollV>
            <ScrollButton aria-label="向上滚动"><Chevron dir="up" /></ScrollButton>
            <Track />
            <Thumb $upright aria-label="垂直滚动块" />
            <ScrollButton aria-label="向下滚动"><Chevron /></ScrollButton>
          </ScrollV>
        </CanvasRow>
        <TabRow>
          <TabNav aria-label="第一个"><TabArrow d="M1 1v6M7 1v6L3 4z" /></TabNav>
          <TabNav aria-label="上一个"><TabArrow d="M6 1v6L3 4z" /></TabNav>
          <TabNav aria-label="下一个"><TabArrow d="M2 1v6l3-3z" /></TabNav>
          <TabNav aria-label="最后一个"><TabArrow d="M1 1v6l4-3zM7 1v6" /></TabNav>
          <Tab $active>模型</Tab>
          <Tab>布局1</Tab>
          <Tab>布局2</Tab>
          <ScrollH>
            <ScrollButton aria-label="向左滚动"><Chevron dir="left" /></ScrollButton>
            <Track />
            <Thumb aria-label="水平滚动块" />
            <ScrollButton aria-label="向右滚动"><Chevron dir="right" /></ScrollButton>
          </ScrollH>
          <Corner />
        </TabRow>
      </Sheet>
      <SideColumn $w={25} $pad={3}>
        <ToolPalette icons={MODIFY} height={299} />
        <ToolPalette icons={ORDER} height={76} />
      </SideColumn>
      <ImeBar>
        <SogouMark size={21} />
        <ImeKeys>
          <ImeButton aria-label="中文">中</ImeButton>
          <ImeButton aria-label="标点">°,</ImeButton>
          {["smile", "mic", "keyboard", "person", "shirt", "wrench"].map((n) => (
            <ImeButton key={n} aria-label={n}><Icon name={n} size={13} /></ImeButton>
          ))}
        </ImeKeys>
      </ImeBar>
      <SideWidget />
    </Workspace>
  );
}

/* ---------- command line ---------- */

const CommandPanel = styled.section`
  display: flex;
  border-top: 4px solid #696969;
  background: #fff;
`;

const CommandGrip = styled.div`
  width: 12px;
  padding: 2px 1px;
  background: #a0a0a0;
  &::before {
    content: "";
    display: block;
    height: 3px;
    background: repeating-linear-gradient(90deg, #555 0 2px, #a0a0a0 2px 3px);
  }
`;

const CommandBody = styled.div`
  flex: 1;
  min-width: 0;
  color: #111;
  font: 12px "Liberation Mono", "Noto Sans CJK SC", monospace;
`;

const History = styled.div`
  display: flex;
  justify-content: space-between;
  height: 31px;
  padding-left: 1px;
  border-bottom: 1px solid #c9c7bd;
  line-height: 13px;
`;

const HistoryLine = styled.div`
  white-space: pre;
`;

const HistoryScroll = styled.div`
  display: flex;
  flex-direction: column;
  justify-content: space-between;
  padding: 1px;
  background: #f4f3ec;
`;

const PromptRow = styled(Row)`
  height: 15px;
  padding-left: 1px;
  white-space: pre;
`;

const PromptInput = styled.input`
  flex: 1;
  min-width: 0;
`;

const PromptScroll = styled(Row)`
  width: 66px;
  height: 15px;
  padding: 0 14px 0 0;
  background: linear-gradient(90deg, #f8f7f0 52px, #ece9d8 52px);
`;

function CommandLine() {
  return (
    <CommandPanel>
      <CommandGrip />
      <CommandBody>
        <History>
          <div>
            <HistoryLine><Mixed text="命令:" latin={11} /></HistoryLine>
            <HistoryLine><Mixed text="命令: _insert" latin={11} /></HistoryLine>
          </div>
          <HistoryScroll>
            <ScrollButton aria-label="向上滚动"><Chevron dir="up" /></ScrollButton>
            <ScrollButton aria-label="向下滚动"><Chevron /></ScrollButton>
          </HistoryScroll>
        </History>
        <PromptRow>
          <label htmlFor="prompt"><Mixed text="指定插入点或 [基点(B)/比例(S)/X/Y/Z/旋转(R)]:" latin={11} /></label>
          <PromptInput id="prompt" />
          <PromptScroll>
            <ScrollButton aria-label="向左滚动"><Chevron dir="left" /></ScrollButton>
            <Thumb aria-label="滚动块" />
            <Track />
            <ScrollButton aria-label="向右滚动"><Chevron dir="right" /></ScrollButton>
          </PromptScroll>
        </PromptRow>
      </CommandBody>
    </CommandPanel>
  );
}

/* ---------- status bar ---------- */

const StatusBar = styled.footer`
  display: flex;
  height: 17px;
  border-top: 1px solid #5a5a5a;
  background: linear-gradient(#969696, #7f7f7f);
  color: #111;
`;

const Coordinates = styled.span`
  width: 170px;
  padding-left: 9px;
  font: 8px ${MONO};
  line-height: 17px;
`;

const StatusButton = styled.button<{ $on?: boolean; $w?: number }>`
  display: flex;
  flex: none;
  align-items: center;
  justify-content: center;
  gap: 2px;
  width: ${(p) => p.$w ?? 17}px;
  height: 16px;
  border: solid #6a6a6a;
  border-width: 0 1px 0 0;
  background: ${(p) => (p.$on ? "linear-gradient(#c6ecf2, #8fc4d2)" : "linear-gradient(#b4b4b4, #989898)")};
  font: 8px ${MONO};
  white-space: nowrap;
`;

const StatusGap = styled.span<{ $w?: number }>`
  ${(p) => (p.$w ? `width: ${p.$w}px;` : "flex: 1;")}
  border-right: 1px solid #5f5f5f;
`;

const TOGGLES: [string, boolean][] = [["snap", false], ["grid", false], ["ortho", false], ["polar", true], ["osnap", true], ["otrack", true], ["ducs", true], ["dyn", true], ["lwt", false], ["qp", true]];

function Status() {
  return (
    <StatusBar>
      <Coordinates>3752.3023, 2002.1140, 0.0000</Coordinates>
      {TOGGLES.map(([n, on]) => <StatusButton key={n} $on={on} aria-pressed={on} aria-label={n}><Icon name={n} size={13} /></StatusButton>)}
      <StatusGap />
      <StatusButton aria-label="模型"><Icon name="model" size={13} /></StatusButton>
      <StatusButton aria-label="图纸"><Icon name="layout" size={13} /></StatusButton>
      <StatusGap $w={13} />
      {["pan", "zoom", "wheel", "motion"].map((n) => <StatusButton key={n} aria-label={n}><Icon name={n} /></StatusButton>)}
      <StatusGap $w={14} />
      <StatusButton $w={43}><Icon name="scaleMark" size={13} />1:1<Caret /></StatusButton>
      <StatusButton aria-label="注释可见性"><Icon name="annoVis" size={13} /></StatusButton>
      <StatusButton aria-label="自动缩放"><Icon name="annoAuto" size={13} /></StatusButton>
      <StatusGap $w={5} />
      <StatusButton $w={84}><Icon name="gear" size={12} />AutoCAD 经典<Caret /></StatusButton>
      <StatusButton aria-label="锁定"><Icon name="lock" size={13} /></StatusButton>
      <StatusButton $w={13} aria-label="状态栏菜单"><Caret /></StatusButton>
      <StatusButton $w={18} aria-label="全屏显示"><Icon name="clean" size={13} /></StatusButton>
    </StatusBar>
  );
}

/* ---------- task bar ---------- */

const TaskBar = styled.nav`
  display: flex;
  align-items: center;
  height: 23px;
  background: linear-gradient(#4a90f5, #2560dd 4px, #2460e0 19px, #1b48b4);
  color: #fff;
`;

const StartButton = styled.button`
  display: flex;
  align-items: center;
  gap: 5px;
  width: 76px;
  height: 23px;
  padding-left: 8px;
  border-radius: 0 10px 10px 0;
  background: linear-gradient(#5fb75f, #388e38 5px, #2f8a2f 18px, #226b22);
  font: italic 15px ${SANS};
  text-shadow: 1px 1px 1px #1a4a1a;
`;

const QuickLaunch = styled(Row)`
  width: 80px;
  padding-left: 6px;
`;

const Task = styled.button<{ $active?: boolean }>`
  display: flex;
  flex: 0 1 124px;
  align-items: center;
  gap: 3px;
  min-width: 0;
  height: 19px;
  margin-right: 1px;
  padding-left: 7px;
  border-radius: 2px;
  background: ${(p) => (p.$active ? "#1b4cae" : "linear-gradient(#5c9bfa, #3b7df0 4px, #397bef)")};
  box-shadow: inset 1px 1px ${(p) => (p.$active ? "#153a8c" : "#5f9cff")};
  font: 9px ${MONO};
  white-space: nowrap;
`;

const Tray = styled(Row)`
  justify-content: space-between;
  height: 23px;
  width: 87px;
  font: 9px ${MONO};
`;

const TrayBox = styled(Row)`
  width: 60px;
  height: 23px;
  gap: 1px;
  background: linear-gradient(#3cb4f5, #128ae4 4px, #1290ea 19px, #0f6fc0);
`;

const TrayToggle = styled.button`
  margin-left: -7px;
`;

const Clock = styled.time`
  margin-left: 4px;
`;

function Windows() {
  return (
    <TaskBar>
      <StartButton>
        <svg width="16" height="16" viewBox="0 0 16 16">
          <path d="M3 2q3-2 5 0L6.500 7Q4 5.500 1.500 7z" fill="#f0562c" />
          <path d="M9 2.500q3 1.500 5.500 0L13 7.500q-3 1.500-5.500 0z" fill="#8cd03a" />
          <path d="M1.200 8q3-1.500 5 0L4.700 13Q2.500 11.500 0 13z" fill="#4a9af0" />
          <path d="M7.200 8.500q3 1.500 5.500 0L11.200 13.500q-3 1.500-5.500 0z" fill="#ffcc2e" />
        </svg>
        开始
      </StartButton>
      <QuickLaunch>
        <IconButton aria-label="安全卫士">
          <svg width="13" height="13" viewBox="0 0 16 16"><circle cx="8" cy="8" r="7" fill="#f5d020" stroke="#c9a010" /><path d="M8 4v8M4 8h8" stroke="#258a2a" strokeWidth="3" /></svg>
        </IconButton>
        <IconButton aria-label="软件管家">
          <svg width="13" height="13" viewBox="0 0 16 16"><rect width="16" height="16" rx="3" fill="#f05a3a" /><path d="M8 0h5q3 0 3 3v5H8z" fill="#f4b13a" /><path d="M0 8h8v8H3q-3 0-3-3z" fill="#3a8df0" /><path d="M8 8h8v5q0 3-3 3H8z" fill="#5ac04a" /><path d="M5 5h6v6H5z" fill="#fff" opacity=".85" /></svg>
        </IconButton>
        <IconButton aria-label="浏览器">
          <svg width="14" height="14" viewBox="0 0 16 16" fill="none"><path d="M3.500 8.500h9Q12.500 4 8.500 4T4 9t4.500 4.500q3 0 4-2" stroke="#8fd4ff" strokeWidth="2.200" /><path d="M2 14Q0 11 6 5.500T14.500 2q1 1-1 4" stroke="#f6c945" strokeWidth="1.300" /></svg>
        </IconButton>
        <IconButton aria-label="更多">»</IconButton>
      </QuickLaunch>
      <Task>
        <svg width="12" height="12" viewBox="0 0 16 16" fill="none"><path d="M13 13a6.500 6.500 0 1 0-9 0" stroke="#bfe6ff" strokeWidth="3" /><path d="M5 15q1-4 5-3 5 0 5 3z" fill="#fff" /></svg>
        高级编辑器_百度经验
      </Task>
      <Task $active>
        <svg width="13" height="13" viewBox="0 0 16 16"><path d="M1 5h14v10H1z" fill="#f4f4f4" /><path d="M0 12L4 1h3l4 11H8L7 9H4l-1 3z" fill="#d9242a" /><path d="M12 2v6" stroke="#d9242a" strokeWidth="2" /></svg>
        <Latin $size={8}>AutoCAD 2010 - [...</Latin>
      </Task>
      <Task>
        <svg width="12" height="12" viewBox="0 0 16 16"><path d="M1 2h9L8 8H6L5 5H2z" fill="#2a66c8" stroke="#9cc4ff" /><rect x="6" y="7" width="9" height="8" fill="#8fb9f5" /><path d="M7.500 9l1.500 4 1.500-3 1.500 3 1.500-4" fill="none" stroke="#fff" /></svg>
        <span><Mixed text="文字文稿1 - WPS ..." latin={8} /></span>
      </Task>
      <Task>
        <svg width="12" height="12" viewBox="0 0 16 16" fill="none"><rect width="16" height="16" rx="3" fill="#f0306a" /><circle cx="8" cy="8" r="5.500" stroke="#fff" strokeWidth="1.200" /><path d="M5 7h6M5 9.500q3 2 6 0" stroke="#fff" /></svg>
        美图秀秀
      </Task>
      <Track />
      <Tray>
        <SogouMark size={13} />
        <TrayBox>
          <TrayToggle aria-label="显示隐藏的图标">
            <svg width="14" height="14" viewBox="0 0 14 14"><circle cx="7" cy="7" r="6.500" fill="#2f9cf0" stroke="#bfe2ff" strokeWidth=".8" /><path d="M8.500 4L5.500 7l3 3" fill="none" stroke="#fff" strokeWidth="2" /></svg>
          </TrayToggle>
          <svg width="14" height="12" viewBox="0 0 14 12" fill="none"><rect x="1" y="2" width="6" height="5" fill="#d5e8f8" stroke="#5a7ca0" /><path d="M1 9.500h7" stroke="#dde" strokeWidth="2" /><path d="M8 3q1.500 1.500 0 4M10 2q2 2.500 0 6M12 1q2.500 3.500 0 8" stroke="#7be04a" /></svg>
          <Clock><Latin $size={8}>14:14</Latin></Clock>
        </TrayBox>
      </Tray>
    </TaskBar>
  );
}

/* ---------- page ---------- */

const Page = styled.div`
  position: relative;
  display: flex;
  flex-direction: column;
  min-height: 100vh;
  overflow: hidden;
`;

const Watermark = styled.svg`
  position: absolute;
  right: 54px;
  bottom: 20px;
  pointer-events: none;
`;

export default function App() {
  return (
    <Page>
      <GlobalStyle />
      <TitleArea />
      <Toolbars />
      <DrawingArea />
      <CommandLine />
      <Status />
      <Windows />
      <Watermark width="181" height="87" fontFamily="Liberation Sans, Noto Sans CJK SC, sans-serif" fontWeight="bold">
        <g fill="#ffffff" fillOpacity=".85" stroke="#c4c4c4" strokeOpacity=".8">
          <text x="3" y="55" fontSize="40">Bai</text>
          <ellipse cx="70" cy="21" rx="6" ry="8" />
          <ellipse cx="83" cy="10" rx="6" ry="8" />
          <ellipse cx="99" cy="11" rx="6" ry="8" />
          <ellipse cx="109" cy="26" rx="6" ry="8" />
          <path d="M90 23q6 0 11 8l9 10q5 14-10 14H79Q64 53 70 41l9-10q5-8 11-8z" />
          <text x="77" y="52" fontSize="22">du</text>
          <text x="117" y="52" fontSize="31">经验</text>
        </g>
        <text x="5" y="79" fontSize="22" fontWeight="normal" fill="#fff" fillOpacity=".85">jingyan.baidu.com</text>
      </Watermark>
    </Page>
  );
}
